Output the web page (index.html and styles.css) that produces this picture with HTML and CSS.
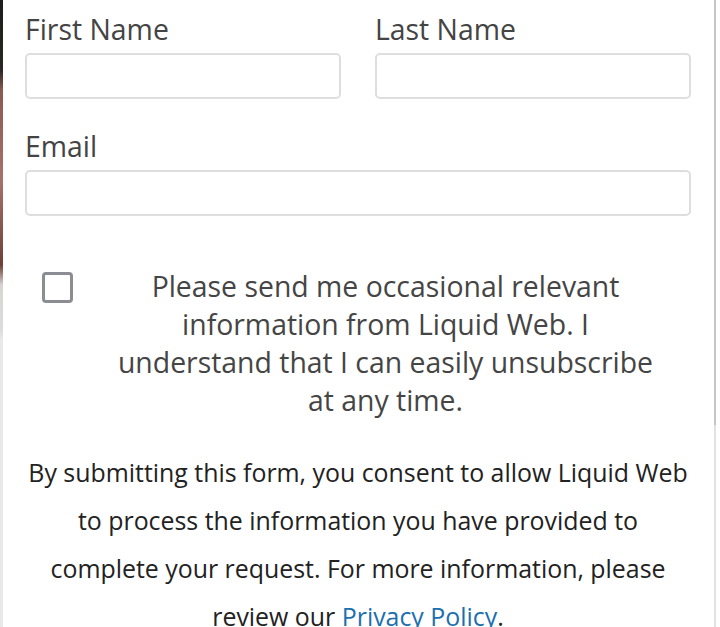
FILE: index.html
```html
<!DOCTYPE html>
<html lang="en">
<head>
<meta charset="utf-8">
<title>Form</title>
<link rel="stylesheet" href="styles.css">
</head>
<body>
<div class="page">
  <form class="form">
    <div class="name-row">
      <div class="field">
        <label class="label" for="fn">First Name</label>
        <input class="input" id="fn" type="text">
      </div>
      <div class="field">
        <label class="label" for="ln">Last Name</label>
        <input class="input" id="ln" type="text">
      </div>
    </div>
    <div class="field email-field">
      <label class="label" for="em">Email</label>
      <input class="input" id="em" type="email">
    </div>
    <div class="opt-row">
      <span class="checkbox"></span>
      <p class="opt-text">Please send me occasional relevant information from Liquid Web. I understand that I can easily unsubscribe at any time.</p>
    </div>
    <p class="consent">By submitting this form, you consent to allow Liquid Web to process the information you have provided to complete your request. For more information, please review our <a class="link" href="#">Privacy Policy</a>.</p>
  </form>
</div>
</body>
</html>
```

FILE: styles.css
```css
html, body {
  margin: 0;
  padding: 0;
  height: 100%;
  overflow: hidden;
}
body {
  font-family: "Open Sans", "Noto Sans", sans-serif;
  background:
    linear-gradient(to bottom, #1e1c1c 0px, #2a2626 70px, #8a5a50 90px, #a57468 180px, #6e4038 265px, #d8d4d4 285px, #dcdcdc 330px, #e9e9e9 340px, #e9e9e9 100%) left top / 3px 100% no-repeat,
    linear-gradient(to bottom, #c6c6c6 0px, #c6c6c6 425px, #e2e2e2 425px, #e2e2e2 100%) 714px 0 / 2px 100% no-repeat,
    #fff;
}
.page {
  width: 720px;
}
.form {
  padding: 0 29px 0 25px;
  margin: 0;
}
.name-row {
  display: grid;
  grid-template-columns: 1fr 1fr;
  column-gap: 34px;
}
.field {
  display: flex;
  flex-direction: column;
}
.label {
  display: block;
  font-size: 28.4px;
  line-height: 38px;
  color: #444;
  margin: 10px 0 5px 0;
}
.input {
  box-sizing: border-box;
  height: 46px;
  width: 100%;
  border: 2px solid #dedede;
  border-radius: 5px;
  background: #fff;
  margin: 0;
  padding: 0 10px;
  font: inherit;
}
.email-field .label {
  margin-top: 28px;
}
.opt-row {
  display: flex;
  align-items: flex-start;
  margin-top: 51px;
}
.checkbox {
  flex: none;
  box-sizing: border-box;
  width: 31px;
  height: 31px;
  border: 3px solid #8c8c93;
  border-radius: 4px;
  margin: 5px 0 0 17px;
}
.opt-text {
  flex: 1;
  margin: 0;
  padding: 0 33px 0 40px;
  font-size: 28.4px;
  line-height: 38px;
  color: #454545;
  text-align: center;
}
.consent {
  margin: 29px 0 0 0;
  font-size: 24.9px;
  line-height: 48px;
  color: #222;
  text-align: center;
}
.link {
  color: #1b6fae;
  text-decoration: none;
}
```
